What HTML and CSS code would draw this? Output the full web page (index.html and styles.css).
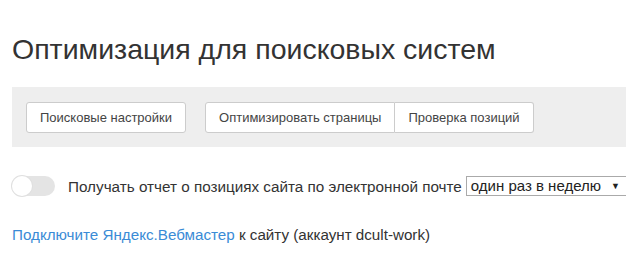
FILE: index.html
```html
<!DOCTYPE html>
<html lang="ru">
<head>
    <meta charset="UTF-8">
    <title>Оптимизация для поисковых систем</title>
    <link rel="stylesheet" href="styles.css">
</head>
<body>
<div class="page">
    <h1 class="title">Оптимизация для поисковых систем</h1>

    <div class="toolbar">
        <button class="btn">Поисковые настройки</button>
        <div class="btn-group">
            <button class="btn">Оптимизировать страницы</button>
            <button class="btn">Проверка позиций</button>
        </div>
    </div>

    <div class="report">
        <span class="switch"><span class="knob"></span></span>
        <span class="report-label">Получать отчет о позициях сайта по электронной почте</span>
        <span class="select">один раз в неделю<span class="arrow">&#9660;</span></span>
    </div>

    <p class="webmaster">
        <a href="#" class="link">Подключите Яндекс.Вебмастер</a> к сайту (аккаунт dcult-work)
    </p>
</div>
</body>
</html>
```

FILE: styles.css
```css
/* SEO settings page */

body {
    margin: 0;
    font-family: "Liberation Sans", Arial, sans-serif;
    color: #333;
    background: #fff;
}
.page {
    padding: 0 0 0 12px;
}
.title {
    margin: 0;
    padding-top: 31px;
    font-size: 28.5px;
    font-weight: normal;
    line-height: 36px;
    color: #333;
}
.toolbar {
    margin-top: 20px;
    height: 60px;
    background: #eee;
    display: flex;
    align-items: center;
    gap: 19px;
    padding-left: 14px;
}
.btn {
    font-family: inherit;
    font-size: 13px;
    color: #444;
    background: #fff;
    border: 1px solid #ccc;
    border-radius: 3px;
    height: 31px;
    padding: 0 13px;
    cursor: pointer;
}
.btn-group {
    display: flex;
}
.btn-group .btn:first-child {
    border-radius: 3px 0 0 3px;
}
.btn-group .btn + .btn {
    border-left: none;
    border-radius: 0 3px 3px 0;
}
.report {
    margin-top: 29px;
    display: flex;
    align-items: center;
    font-size: 15.25px;
    color: #333;
    white-space: nowrap;
}
.switch {
    flex-shrink: 0;
    width: 43px;
    height: 20px;
    border-radius: 10px;
    background: #e4e4e4;
    position: relative;
    margin-right: 13px;
}
.knob {
    position: absolute;
    left: 0;
    top: 0;
    width: 20px;
    height: 20px;
    border-radius: 50%;
    background: #fff;
    box-shadow: 0 0 0 1px #e0e0e0;
}
.report-label {
    flex-shrink: 0;
}
.select {
    flex-shrink: 0;
    margin-left: 4px;
    border: 1px solid #aaa;
    padding: 0 7px 0 4px;
    height: 18px;
    line-height: 18px;
    font-size: 15px;
    color: #222;
    display: inline-flex;
    align-items: center;
}
.arrow {
    font-size: 9px;
    margin-left: 10px;
}
.webmaster {
    margin: 30px 0 0;
    font-size: 15.2px;
}
.link {
    color: #3a8bd6;
    text-decoration: none;
    border-bottom: 2px solid #d6d6ee;
    padding-bottom: 1px;
}
```
